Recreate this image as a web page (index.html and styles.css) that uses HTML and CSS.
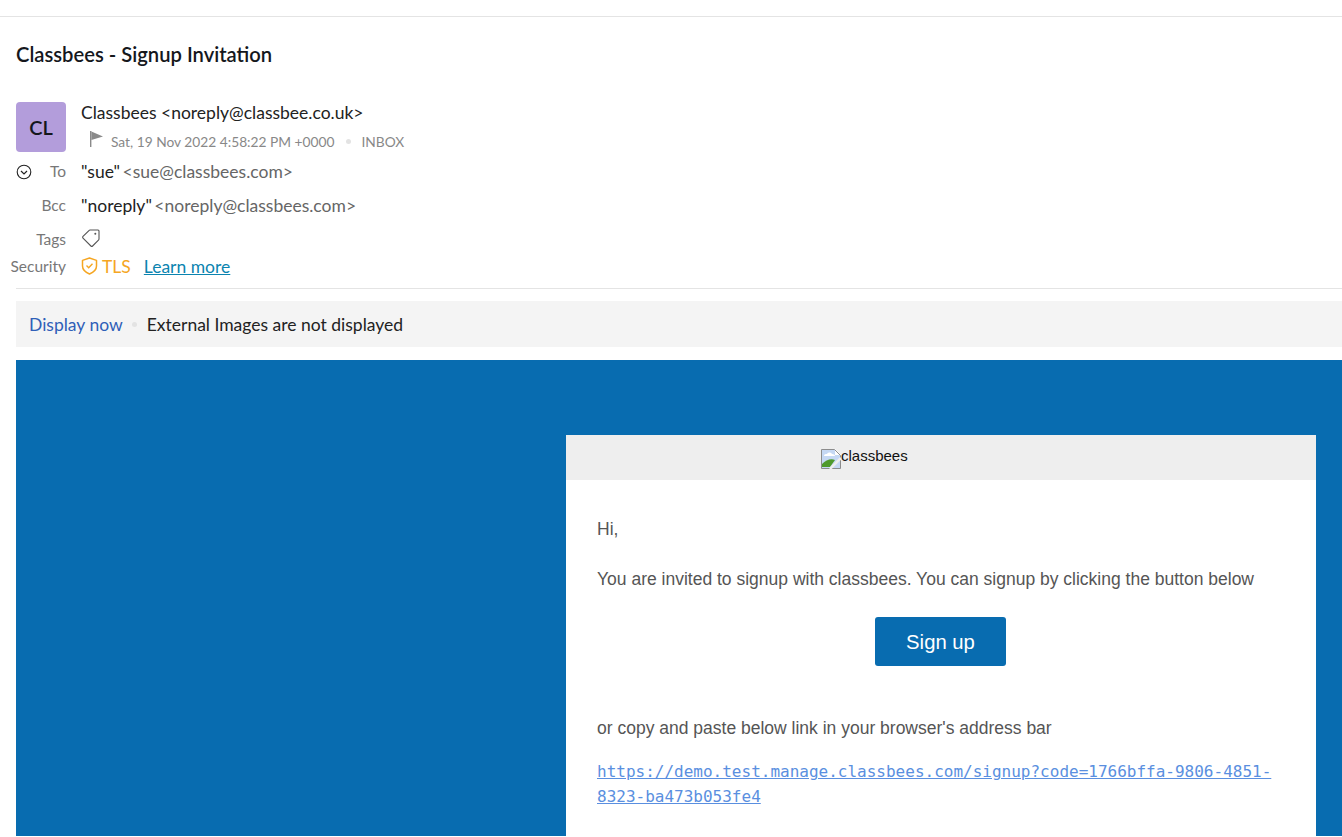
FILE: index.html
```html
<!DOCTYPE html>
<html lang="en">
<head>
<meta charset="utf-8">
<title>Classbees - Signup Invitation</title>
<link rel="stylesheet" href="styles.css">
</head>
<body>
<div class="page">
  <div class="topline"></div>
  <h1 class="subject">Classbees - Signup Invitation</h1>
  <section class="sender">
    <div class="avatar">CL</div>
    <div class="sender-text">
      <div class="from">Classbees <span>&lt;noreply@classbee.co.uk&gt;</span></div>
      <div class="meta">
        <svg class="flag" width="16" height="18" viewBox="0 0 16 18"><path d="M1 1h1.400v16H1z" fill="#8a8a8a"/><path d="M2.400 1.500 14 6.600 2.400 10z" fill="#8a8a8a"/></svg>
        <span>Sat, 19 Nov 2022 4:58:22 PM +0000</span>
        <i class="dot"></i>
        <span>INBOX</span>
      </div>
    </div>
  </section>
  <div class="row row-to">
    <svg class="chev" width="16" height="16" viewBox="0 0 16 16"><circle cx="8" cy="8" r="6.800" fill="none" stroke="#222" stroke-width="1.100"/><path d="M5 7l3 3 3-3" fill="none" stroke="#222" stroke-width="1.200"/></svg>
    <div class="label">To</div>
    <div class="value"><b>"sue"</b> &lt;sue@classbees.com&gt;</div>
  </div>
  <div class="row row-bcc">
    <div class="label">Bcc</div>
    <div class="value"><b>"noreply"</b> &lt;noreply@classbees.com&gt;</div>
  </div>
  <div class="row row-tags">
    <div class="label">Tags</div>
    <svg class="tag" width="20" height="20" viewBox="0 0 20 20"><path d="M2 8.400 8.200 2.300a1 1 0 0 1 .7-.3h8.100a1 1 0 0 1 1 1v8.100a1 1 0 0 1-.3.7l-6.100 6.200a1.200 1.200 0 0 1-1.700 0L2 10.100a1.200 1.200 0 0 1 0-1.700z" fill="none" stroke="#555" stroke-width="1.100" stroke-linejoin="round"/><circle cx="14.300" cy="5.700" r="1" fill="#555"/></svg>
  </div>
  <div class="row row-sec">
    <div class="label">Security</div>
    <div class="value sec">
      <svg class="shield" width="17" height="18" viewBox="0 0 17 18"><path d="M8.500 1 15.500 3.400V9c0 3.800-3 6.300-7 8-4-1.700-7-4.200-7-8V3.400z" fill="none" stroke="#f5a623" stroke-width="1.500" stroke-linejoin="round"/><path d="M5.500 8.500l2.200 2.200 3.800-3.900" fill="none" stroke="#f5a623" stroke-width="1.400"/></svg>
      <span class="tls">TLS</span>
      <a class="learn" href="#">Learn more</a>
    </div>
  </div>
  <div class="divider"></div>
  <div class="notice">
    <a class="display" href="#">Display now</a>
    <i class="dot"></i>
    <span>External Images are not displayed</span>
  </div>
  <main class="mail">
    <div class="card">
      <div class="card-head">
        <span class="logo">
          <svg class="broken" width="20" height="20" viewBox="0 0 20 20"><path d="M.5.500h13l6 6v13H.500z" fill="#c5d8f4"/><path d="M3 7c0-2 2-2 3-2 1-2 4-2 5 0 2 0 3 1 3 2z" fill="#fff"/><path d="M1 18v-3c4-4 9-6 13-4l-5 7z" fill="#4f9a2c"/><path d="M14 0v6h6z" fill="#fff"/><path d="M.500.500h13l6 6v13H.500z" fill="none" stroke="#8c8c8c"/><path d="M9 20 20 9" stroke="#eeeeee" stroke-width="2.500"/></svg><span class="logo-text">classbees</span>
        </span>
      </div>
      <div class="card-body">
        <p class="hi">Hi,</p>
        <p class="invite">You are invited to signup with classbees. You can signup by clicking the button below</p>
        <div class="cta"><a class="signup" href="#">Sign up</a></div>
        <p class="copy">or copy and paste below link in your browser's address bar</p>
        <a class="link" href="#">https://demo.test.manage.classbees.com/signup?code=1766bffa-9806-4851-8323-ba473b053fe4</a>
      </div>
    </div>
  </main>
</div>
</body>
</html>
```
FILE: styles.css
```css
html, body {
  margin: 0;
  padding: 0;
  height: 100%;
  overflow: hidden;
  background: #fff;
}
.page {
  height: 837px;
  overflow: hidden;
  font-family: Lato, "Liberation Sans", sans-serif;
  font-size: 17.5px;
  color: #222;
}
.topline {
  height: 1px;
  margin-top: 16px;
  background: #e4e4e4;
}
.subject {
  margin: 23px 0 0 16px;
  height: 62px;
  font-size: 20.2px;
  line-height: 28px;
  font-weight: 600;
  color: #15171c;
}
.sender {
  display: flex;
  margin-left: 16px;
  gap: 15px;
  height: 52px;
}
.avatar {
  width: 50px;
  height: 50px;
  border-radius: 4px;
  background: #b39ddb;
  color: #15171c;
  font-size: 20px;
  font-weight: 600;
  line-height: 50px;
  text-align: center;
}
.from {
  font-size: 17.5px;
  line-height: 22px;
  color: #222;
}
.meta {
  display: flex;
  align-items: center;
  height: 18px;
  margin-top: 8px;
  padding-left: 8px;
  font-size: 13.75px;
  color: #888;
}
.flag {
  margin-right: 6px;
  position: relative;
  top: -2px;
}
.dot {
  width: 5px;
  height: 5px;
  border-radius: 50%;
  background: #e3e3e3;
  margin: 0 10px 0 12px;
}
.row {
  display: flex;
  align-items: center;
  padding-left: 10px;
  position: relative;
}
.row-to { height: 34px; }
.row-bcc { height: 34px; }
.row-tags { height: 34px; }
.row-sec { height: 20px; }
.label {
  width: 56px;
  margin-right: 15px;
  text-align: right;
  font-size: 15.5px;
  color: #777;
  flex: none;
}
.chev {
  position: absolute;
  left: 16px;
  top: 10px;
}
.value {
  font-size: 17.5px;
  color: #666;
  word-spacing: -2px;
}
.value b {
  font-weight: 400;
  color: #222;
}
.tag { margin-top: -2px; }
.sec {
  display: flex;
  align-items: center;
  word-spacing: 0;
}
.shield { margin-right: 4px; }
.tls {
  color: #f5a623;
  font-size: 17.5px;
  margin-right: 13px;
}
.learn {
  color: #0b84b0;
  font-size: 17.5px;
}
.divider {
  height: 1px;
  background: #e4e4e4;
  margin: 12px 0 0 16px;
}
.notice {
  display: flex;
  align-items: center;
  height: 46px;
  margin: 12px 0 13px 16px;
  padding-left: 13px;
  background: #f4f4f4;
  font-size: 17.5px;
  color: #222;
}
.notice .dot { margin: 0 10px 0 9px; }
.display {
  color: #2f5fb8;
  text-decoration: none;
}
.mail {
  margin-left: 16px;
  height: 476px;
  background: #086cb0;
  display: flex;
  justify-content: flex-end;
  padding: 75px 26px 0 0;
  box-sizing: border-box;
}
.card {
  width: 750px;
  background: #fff;
  font-family: "Liberation Sans", Arial, sans-serif;
}
.card-head {
  height: 45px;
  background: #eeeeee;
  display: flex;
  align-items: center;
  padding-left: 255px;
}
.logo {
  display: flex;
  align-items: center;
  font-size: 15px;
  color: #111;
}
.logo-text {
  line-height: 18px;
  margin-top: -4px;
}
.broken { position: relative; top: 1px; }
.card-body {
  padding: 39px 31px 0;
  font-size: 17.5px;
  color: #555;
}
.card-body p { margin: 0; }
.hi { line-height: 20px; }
.invite { line-height: 20px; margin-top: 30px !important; }
.cta {
  text-align: center;
  margin-top: 28px;
  padding-right: 1px;
}
.signup {
  display: inline-block;
  width: 131px;
  height: 49px;
  line-height: 51px;
  border-radius: 3px;
  background: #086cb0;
  color: #fff;
  font-size: 20.3px;
  text-decoration: none;
}
.copy { line-height: 20px; margin-top: 52px !important; }
.link {
  display: block;
  margin-top: 21px;
  font-family: "DejaVu Sans Mono", monospace;
  font-size: 16px;
  line-height: 25px;
  color: #5a8fe0;
  text-decoration: underline;
}
```
